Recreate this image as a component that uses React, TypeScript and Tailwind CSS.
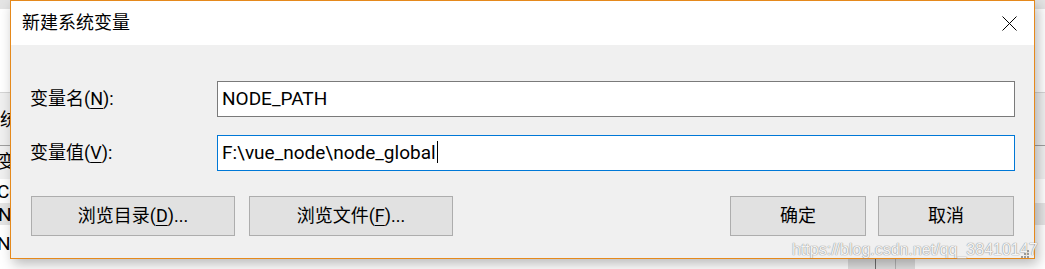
import React from "react";

const Mn: React.FC<{ children: React.ReactNode }> = ({ children }) => (
  <span className="underline decoration-1 underline-offset-[3px]">{children}</span>
);

const WinButton: React.FC<{ w: string; children: React.ReactNode }> = ({ w, children }) => (
  <button
    className={`${w} h-[40px] bg-[#e1e1e1] border border-[#adadad] flex items-center justify-center text-[18px] leading-none text-black`}
  >
    {children}
  </button>
);

// parent "environment variables" window peeking out behind the dialog
const BehindWindow = () => (
  <div className="absolute inset-0 bg-white text-[18px] leading-none text-black">
    <div className="h-[9px] bg-[#e4e4e4]" />
    <div className="h-[83px] bg-white" />
    <div className="h-[53px] border-t border-[#d5d5d5] bg-[#f0f0f0] flex items-center">
      <span className="ml-[-18px] mt-[2px]">系统</span>
    </div>
    <div className="h-[34px] border-t border-[#a0a0a0] bg-[#f0f0f0] flex items-center">
      <span className="ml-[-2px] mt-[-2px]">变</span>
    </div>
    <div className="h-[24px] flex items-center">
      <span className="ml-[-3px] text-[19px]">Co</span>
    </div>
    <div className="h-[22px] bg-[#e5e5e5] flex items-center">
      <span className="ml-[-2px] text-[19px]">N</span>
    </div>
    <div className="h-[36px] flex items-center">
      <span className="ml-[-3px] text-[19px]">NUMBER_OF_P</span>
    </div>
    <div className="absolute left-[848px] top-[259px] w-[67px] h-[10px] bg-[#e1e1e1] flex">
      <div className="w-[27px]" />
      <div className="w-[1px] bg-[#6e6e6e]" />
      <div className="w-[19px]" />
      <div className="w-[1px] bg-[#b5b5b5]" />
    </div>
  </div>
);

export default function App() {
  return (
    <div className="relative w-[1045px] h-[269px] overflow-hidden font-['Roboto','Noto_Sans_CJK_SC',sans-serif] bg-white">
      <BehindWindow />

      <div className="absolute left-[10px] top-0 w-[1025px] h-[259px] border border-[#e5891c] bg-[#f0f0f0] flex flex-col shadow-[3px_5px_12px_rgba(0,0,0,0.28)]">
        <div className="h-[44px] bg-white flex items-center justify-between pl-[11px] pr-[17px]">
          <span className="text-[18px] leading-none text-black">新建系统变量</span>
          <svg width="15" height="15" viewBox="0 0 15 15">
            <path d="M0.5 0.5 L14.5 14.5 M14.5 0.5 L0.5 14.5" stroke="#000" strokeWidth="1" fill="none" />
          </svg>
        </div>

        <div className="flex-1 flex flex-col pt-[36px] px-[19px]">
          <div className="flex items-center h-[36px]">
            <span className="w-[187px] text-[18px] leading-none text-black">
              变量名(<Mn>N</Mn>):
            </span>
            <div className="flex-1 h-[36px] border border-[#7a7a7a] bg-white flex items-center pl-[4px] pb-[2px] text-[19px] leading-none text-black">
              NODE_PATH
            </div>
          </div>

          <div className="flex items-center h-[36px] mt-[18px]">
            <span className="w-[187px] text-[18px] leading-none text-black">
              变量值(<Mn>V</Mn>):
            </span>
            <div className="flex-1 h-[36px] border border-[#0078d7] bg-white flex items-center pl-[4px] pb-[2px] text-[19px] leading-none text-black">
              <span>F:\vue_node\node_global</span>
              <span className="w-[1px] h-[22px] bg-black ml-[1px]" />
            </div>
          </div>

          <div className="flex justify-between mt-[25px] px-[1px]">
            <div className="flex gap-[14px]">
              <WinButton w="w-[204px]">
                浏览目录(<Mn>D</Mn>)...
              </WinButton>
              <WinButton w="w-[204px]">
                浏览文件(<Mn>F</Mn>)...
              </WinButton>
            </div>
            <div className="flex gap-[12px]">
              <WinButton w="w-[136px]">确定</WinButton>
              <WinButton w="w-[136px]">取消</WinButton>
            </div>
          </div>
        </div>
      </div>

      {/* blog watermark over the screenshot */}
      <div className="absolute left-[792px] top-[242px] flex items-center">
        <span className="text-[16px] leading-none font-['Liberation_Sans',sans-serif] text-[#f4f4f4] [text-shadow:0_0_1px_#8c8c8c,0_0_1px_#8c8c8c]">
          https://blog.csdn.net/qq_38410147
        </span>
      </div>
      <svg className="absolute left-[1021px] top-[250px]" width="8" height="8" viewBox="0 0 8 8">
        <rect x="6" y="0" width="2" height="2" fill="#9a9a9a" />
        <rect x="3" y="3" width="2" height="2" fill="#9a9a9a" />
        <rect x="6" y="3" width="2" height="2" fill="#9a9a9a" />
        <rect x="0" y="6" width="2" height="2" fill="#9a9a9a" />
        <rect x="3" y="6" width="2" height="2" fill="#9a9a9a" />
        <rect x="6" y="6" width="2" height="2" fill="#9a9a9a" />
      </svg>
    </div>
  );
}
